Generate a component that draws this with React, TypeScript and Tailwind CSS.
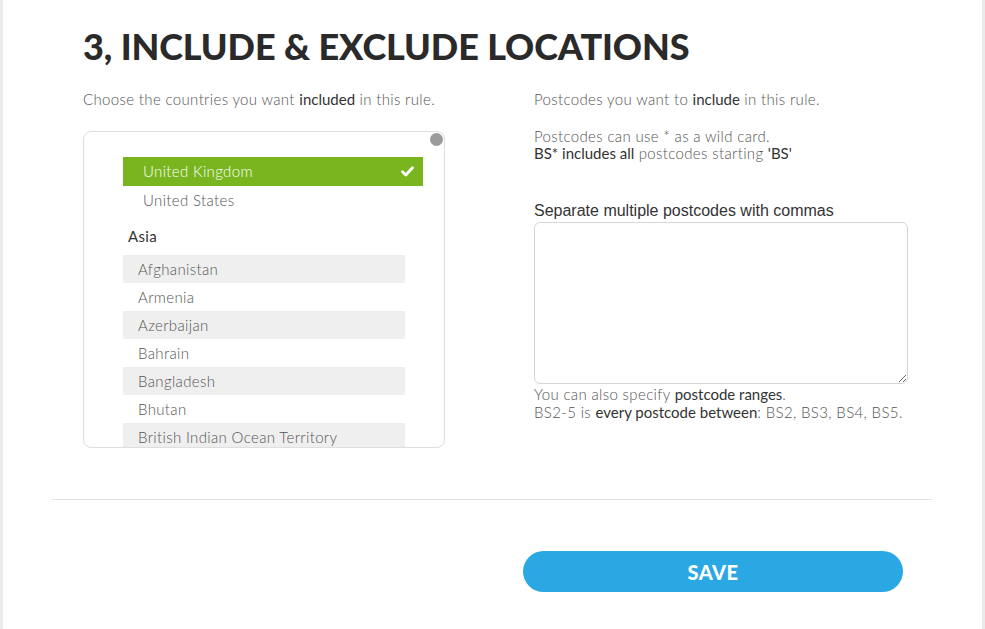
import React from 'react';

const firstGroup = ['United Kingdom', 'United States'];
const asia = ['Afghanistan', 'Armenia', 'Azerbaijan', 'Bahrain', 'Bangladesh', 'Bhutan', 'British Indian Ocean Territory'];

const font = { fontFamily: 'Lato, "Open Sans", sans-serif' };

function CheckMark() {
  return (
    <svg width="13" height="11" viewBox="0 0 13 11" fill="none">
      <path d="M1.5 5.8 L4.8 9 L11.5 1.8" stroke="white" strokeWidth="2.8" strokeLinecap="round" strokeLinejoin="round" />
    </svg>
  );
}

export default function App() {
  return (
    <div className="w-full h-[629px] bg-[#ebebeb] overflow-hidden" style={font}>
      <div className="mx-[3px] h-full bg-white relative">
        <div className="pl-[80px] pt-[26px]">
          <h1 className="text-[36px] leading-[40px] font-black tracking-[-0.1px] text-[#2a2a2a]">
            3, INCLUDE &amp; EXCLUDE LOCATIONS
          </h1>
        </div>

        <div className="flex pl-[80px] pt-[23px] tracking-[0.35px]">
          {/* countries */}
          <div className="w-[451px] shrink-0">
            <p className="text-[15px] leading-[20px] font-light text-[#555]">
              Choose the countries you want <span className="font-normal text-[#333] tracking-normal">included</span> in this rule.
            </p>
            <div className="relative mt-[22px] w-[362px] h-[317px] border border-[#dedede] rounded-[8px] overflow-hidden">
              <div className="absolute right-[1px] top-[1px] w-[13px] h-[13px] rounded-full bg-[#9b9b9b]" />
              <div className="pl-[39px] pt-[25px]">
                <div className="w-[300px]">
                  {firstGroup.map((c, i) => (
                    <div
                      key={c}
                      className={
                        i === 0
                          ? 'h-[29px] flex items-center justify-between pl-[20px] pr-[9px] bg-[#79b51f] text-white text-[15px] font-light'
                          : 'h-[28px] flex items-center pl-[20px] text-[#555] text-[15px] font-light'
                      }
                    >
                      <span>{c}</span>
                      {i === 0 && <CheckMark />}
                    </div>
                  ))}
                </div>
                <div className="pl-[5px] pt-[12px] pb-[9px] text-[15px] leading-[20px] text-[#333]">Asia</div>
                <div className="w-[282px]">
                  {asia.map((c, i) => (
                    <div
                      key={c}
                      className={`h-[28px] flex items-center pl-[15px] text-[15px] font-light text-[#555] ${i % 2 === 0 ? 'bg-[#efefef]' : ''}`}
                    >
                      {c}
                    </div>
                  ))}
                </div>
              </div>
            </div>
          </div>

          {/* postcodes */}
          <div className="w-[374px] shrink-0">
            <p className="text-[15px] leading-[20px] font-light text-[#555]">
              Postcodes you want to <span className="font-normal text-[#333] tracking-normal">include</span> in this rule.
            </p>
            <p className="mt-[19px] text-[15px] leading-[17px] font-light text-[#555]">
              Postcodes can use * as a wild card.
              <br />
              <span className="font-normal text-[#333] tracking-normal">BS* includes all</span> postcodes starting <span className="font-normal text-[#333] tracking-normal">'BS'</span>
            </p>
            <label
              className="block mt-[40px] text-[16px] leading-[18px] tracking-normal text-[#333]"
              style={{ fontFamily: '"Liberation Sans", Arial, sans-serif' }}
            >
              Separate multiple postcodes with commas
            </label>
            <textarea className="block mt-[2px] w-[374px] h-[162px] border border-[#d6d6d6] rounded-[6px] outline-none" />
            <p className="mt-[1px] text-[15px] leading-[18px] font-light text-[#555] whitespace-nowrap">
              You can also specify <span className="font-normal text-[#333] tracking-normal">postcode ranges</span>.
              <br />
              BS2-5 is <span className="font-normal text-[#333] tracking-normal">every postcode between</span>: BS2, BS3, BS4, BS5.
            </p>
          </div>
        </div>

        <div className="absolute left-[49px] top-[499px] w-[880px] h-px bg-[#e2e2e2]" />

        <div className="absolute left-[520px] top-[551px]">
          <button className="w-[380px] h-[41px] rounded-full bg-[#29a8e3] text-white text-[20px] font-black tracking-[0.5px]">
            SAVE
          </button>
        </div>
      </div>
    </div>
  );
}
